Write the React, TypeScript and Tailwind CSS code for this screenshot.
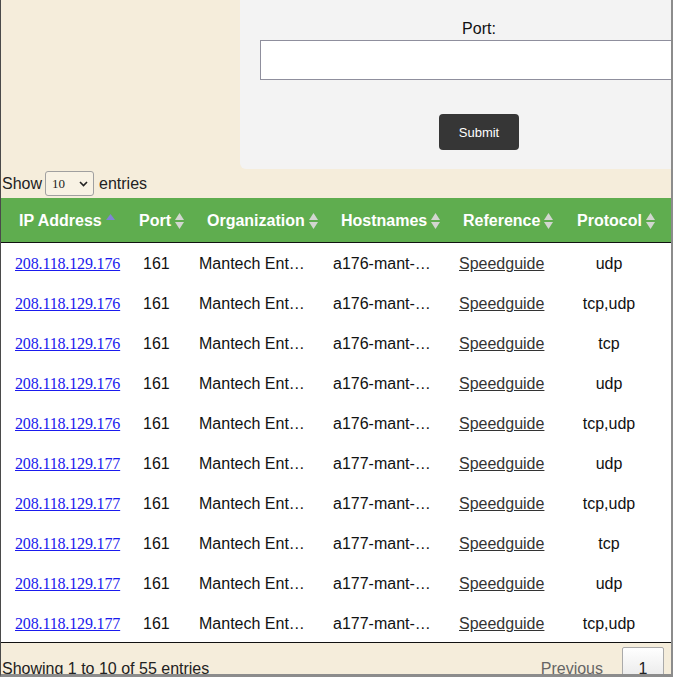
import React from "react";

const rows = [
  { ip: "208.118.129.176", host: "a176-mant-…", proto: "udp" },
  { ip: "208.118.129.176", host: "a176-mant-…", proto: "tcp,udp" },
  { ip: "208.118.129.176", host: "a176-mant-…", proto: "tcp" },
  { ip: "208.118.129.176", host: "a176-mant-…", proto: "udp" },
  { ip: "208.118.129.176", host: "a176-mant-…", proto: "tcp,udp" },
  { ip: "208.118.129.177", host: "a177-mant-…", proto: "udp" },
  { ip: "208.118.129.177", host: "a177-mant-…", proto: "tcp,udp" },
  { ip: "208.118.129.177", host: "a177-mant-…", proto: "tcp" },
  { ip: "208.118.129.177", host: "a177-mant-…", proto: "udp" },
  { ip: "208.118.129.177", host: "a177-mant-…", proto: "tcp,udp" },
];

function SortIcon({ active }: { active?: boolean }) {
  if (active) {
    return (
      <svg width="9" height="16" viewBox="0 0 9 16" className="shrink-0">
        <polygon points="0,7 4.5,1 9,7" fill="#8084d6" />
      </svg>
    );
  }
  return (
    <svg width="9" height="16" viewBox="0 0 9 16" className="shrink-0">
      <polygon points="0,7 4.5,0 9,7" fill="#d2d6d0" />
      <polygon points="0,9 9,9 4.5,16" fill="#d2d6d0" />
    </svg>
  );
}

function Th({ label, pl, active }: { label: string; pl: string; active?: boolean }) {
  return (
    <th className={`p-0 pt-[2px] ${pl} text-left font-bold`}>
      <div className="flex items-center gap-[4px] whitespace-nowrap">
        <span>{label}</span>
        <SortIcon active={active} />
      </div>
    </th>
  );
}

export default function App() {
  return (
    <div
      className="w-[673px] h-[677px] overflow-hidden bg-[#f5eddb] border-l border-l-[#4a4a4a] border-r-2 border-r-[#8c8c8c] border-b-[3px] border-b-[#8c8c8c] text-[16px] text-[#111]"
      style={{ fontFamily: '"Liberation Sans", Arial, sans-serif' }}
    >
      {/* top section */}
      <div className="flex h-[169px]">
        <div className="w-[239px] shrink-0" />
        <div className="flex-1 bg-[#f3f3f3] rounded-bl-[6px] overflow-hidden pl-[20px]">
          <div className="w-[438px] flex flex-col items-center pt-[20px]">
            <div className="leading-[18px]">Port:</div>
            <div className="mt-[2px] w-full h-[40px] bg-white border border-[#8f8f9d]" />
            <button className="mt-[34px] w-[80px] h-[36px] bg-[#363636] rounded-[4px] text-white text-[13px] pt-[2px]">
              Submit
            </button>
          </div>
        </div>
      </div>

      {/* show entries */}
      <div className="h-[29px] flex items-center pl-[1px] text-[#222]">
        <span>Show</span>
        <div className="ml-[3px] w-[49px] h-[25px] border border-[#a0a0a0] rounded-[3px] flex items-center justify-between pl-[6px] pr-[5px] text-[13px] bg-[#f8f2e4]">
          <span style={{ fontFamily: '"Liberation Serif", serif' }}>10</span>
          <svg width="9" height="6" viewBox="0 0 9 6">
            <polyline points="1,1 4.5,4.5 8,1" fill="none" stroke="#222" strokeWidth="1.6" />
          </svg>
        </div>
        <span className="ml-[5px]">entries</span>
      </div>

      {/* table */}
      <table className="table-fixed border-collapse w-[670px]">
        <colgroup>
          <col className="w-[128px]" />
          <col className="w-[62px]" />
          <col className="w-[134px]" />
          <col className="w-[124px]" />
          <col className="w-[114px]" />
          <col className="w-[108px]" />
        </colgroup>
        <thead>
          <tr className="h-[44px] bg-[#5fad4f] text-white border-b border-b-[#111]">
            <Th label="IP Address" pl="pl-[18px]" active />
            <Th label="Port" pl="pl-[10px]" />
            <Th label="Organization" pl="pl-[16px]" />
            <Th label="Hostnames" pl="pl-[16px]" />
            <Th label="Reference" pl="pl-[14px]" />
            <Th label="Protocol" pl="pl-[14px]" />
          </tr>
        </thead>
        <tbody className="bg-white text-[#111]">
          {rows.map((r, i) => (
            <tr key={i} className={`h-[40px] ${i === rows.length - 1 ? "border-b border-b-[#111]" : ""}`}>
              <td className="p-0 pt-[4px] pl-[14px] whitespace-nowrap overflow-hidden">
                <a
                  href="#"
                  className="text-[#1a1aee] underline tracking-[-0.15px]"
                  style={{ fontFamily: '"Liberation Serif", "Times New Roman", serif' }}
                >
                  {r.ip}
                </a>
              </td>
              <td className="p-0 pt-[4px] pl-[14px]">161</td>
              <td className="p-0 pt-[4px] pl-[8px] whitespace-nowrap">Mantech Ent…</td>
              <td className="p-0 pt-[4px] pl-[8px] whitespace-nowrap">{r.host}</td>
              <td className="p-0 pt-[4px] pl-[10px]">
                <a href="#" className="text-[#333] underline">
                  Speedguide
                </a>
              </td>
              <td className="p-0 pt-[4px] pr-[16px] text-center">{r.proto}</td>
            </tr>
          ))}
        </tbody>
      </table>

      {/* footer */}
      <div className="flex justify-between items-start">
        <div className="mt-[17px] pl-[1px] leading-[18px] text-[#222]">Showing 1 to 10 of 55 entries</div>
        <div className="flex items-start mr-[7px] mt-[4px]">
          <div className="pt-[13px] pr-[19px] leading-[18px] text-[#666]">Previous</div>
          <div className="w-[42px] h-[40px] border border-[#aaa] rounded-[2px] bg-gradient-to-b from-white to-[#e4e4e4] text-center pt-[12px] leading-[18px] text-[#222]">
            1
          </div>
        </div>
      </div>
    </div>
  );
}
